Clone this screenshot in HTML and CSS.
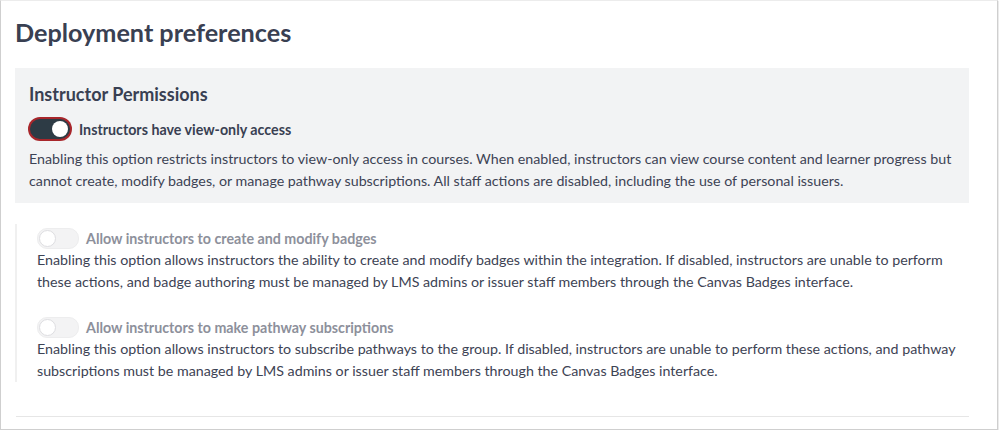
FILE: index.html
```html
<!DOCTYPE html>
<html lang="en">
<head>
<meta charset="utf-8">
<title>Deployment preferences</title>
<link rel="stylesheet" href="styles.css">
</head>
<body>
<div class="frame">
  <h1 class="title">Deployment preferences</h1>
  <section class="panel">
    <h2 class="panel-title">Instructor Permissions</h2>
    <div class="toggle-row">
      <span class="toggle toggle-on toggle-focus"><span class="knob"></span></span>
      <span class="toggle-label">Instructors have view-only access</span>
    </div>
    <p class="desc">Enabling this option restricts instructors to view-only access in courses. When enabled, instructors can view course content and learner progress but cannot create, modify badges, or manage pathway subscriptions. All staff actions are disabled, including the use of personal issuers.</p>
  </section>
  <section class="sub">
    <div class="option">
      <div class="toggle-row">
        <span class="toggle toggle-off"><span class="knob"></span></span>
        <span class="toggle-label disabled">Allow instructors to create and modify badges</span>
      </div>
      <p class="desc">Enabling this option allows instructors the ability to create and modify badges within the integration. If disabled, instructors are unable to perform these actions, and badge authoring must be managed by LMS admins or issuer staff members through the Canvas Badges interface.</p>
    </div>
    <div class="option">
      <div class="toggle-row">
        <span class="toggle toggle-off"><span class="knob"></span></span>
        <span class="toggle-label disabled">Allow instructors to make pathway subscriptions</span>
      </div>
      <p class="desc">Enabling this option allows instructors to subscribe pathways to the group. If disabled, instructors are unable to perform these actions, and pathway subscriptions must be managed by LMS admins or issuer staff members through the Canvas Badges interface.</p>
    </div>
  </section>
  <hr class="rule">
</div>
</body>
</html>
```
FILE: styles.css
```css
html, body {
  margin: 0;
  padding: 0;
  background: #ffffff;
}
body {
  font-family: Lato, "Liberation Sans", sans-serif;
  color: #3d4354;
}
.frame {
  box-sizing: border-box;
  width: 998px;
  height: 430px;
  border: 1px solid #cfcfcf;
  border-top-color: #ececec;
  box-shadow: 1px 1px 1px rgba(0,0,0,0.08);
  padding: 14px 28px 0 14px;
  overflow: hidden;
}
.title {
  margin: 0;
  font-size: 25.2px;
  line-height: 34px;
  font-weight: 700;
  color: #394052;
  height: 53px;
}
.panel {
  background: #f2f3f4;
  padding: 14px 14px 11px 14px;
}
.panel-title {
  margin: 0;
  font-size: 18px;
  line-height: 24px;
  font-weight: 700;
  color: #394052;
}
.toggle-row {
  display: flex;
  align-items: center;
  height: 24px;
}
.panel .toggle-row {
  margin-top: 11px;
  gap: 9px;
}
.toggle {
  box-sizing: border-box;
  position: relative;
  display: inline-flex;
  align-items: center;
  width: 40px;
  height: 20px;
  border-radius: 10px;
  flex: none;
}
.toggle-on {
  background: #2d3b45;
  justify-content: flex-end;
  padding-right: 2px;
}
.toggle-focus {
  box-shadow: 0 0 0 2px #a8262b;
  margin-left: 1px;
}
.toggle-on .knob {
  width: 16px;
  height: 16px;
  border-radius: 50%;
  background: #ffffff;
}
.toggle-off {
  width: 42px;
  height: 21px;
  background: #f3f3f4;
  border: 1px solid #ededee;
  padding-left: 1px;
}
.toggle-off .knob {
  box-sizing: border-box;
  width: 17px;
  height: 17px;
  border-radius: 50%;
  background: #ffffff;
  border: 1px solid #dedee1;
}
.toggle-label {
  font-size: 14.25px;
  font-weight: 700;
  color: #394052;
}
.toggle-label.disabled {
  color: #8d909b;
}
.desc {
  margin: 7px 0 0 0;
  font-size: 14.25px;
  line-height: 22px;
}
.sub {
  margin-top: 21px;
  border-left: 2px solid #f0f0f0;
  padding-left: 20px;
  display: flex;
  flex-direction: column;
  gap: 20px;
}
.sub .toggle-row {
  margin-top: 4px;
  height: 21px;
  gap: 7px;
}
.sub .desc {
  margin-top: 0;
}
.rule {
  margin: 34px 0 0 1px;
  border: 0;
  border-top: 1px solid #e6e6e6;
  height: 0;
}
```
